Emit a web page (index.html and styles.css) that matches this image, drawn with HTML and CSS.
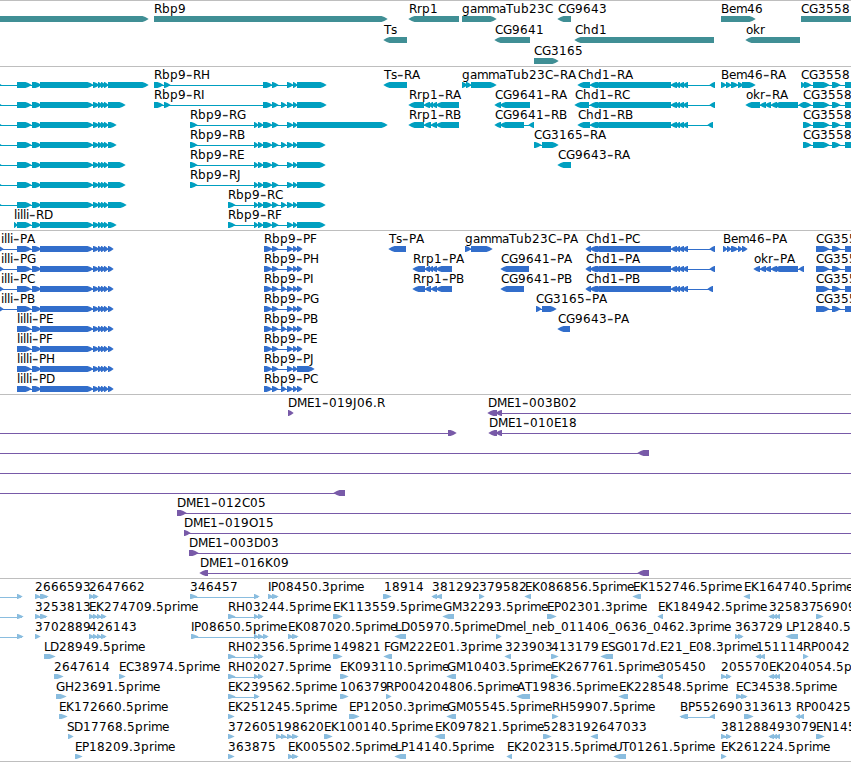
FILE: index.html
```
<!DOCTYPE html>
<html lang="en">
<head>
    <meta charset="UTF-8">
    <meta name="viewport" content="width=device-width, initial-scale=1.0">
    <title>Genome Browser</title>
    <link rel="stylesheet" href="styles.css">
</head>
<body>
    <div class="tracks">
        <svg class="track genes" id="genes"></svg>
        <svg class="track transcripts" id="transcripts"></svg>
        <svg class="track proteins" id="proteins"></svg>
        <svg class="track clones" id="clones"></svg>
        <svg class="track ests" id="ests"></svg>
    </div>
    <script src="tracks.js"></script>
</body>
</html>
```
FILE: styles.css
```
body {
    margin: 0;
    background-color: #ffffff;
    overflow: hidden;
}
.tracks {
    display: flex;
    flex-direction: column;
    width: 851px;
    border-bottom: 1px solid #bebebe;
}
.track {
    display: block;
    box-sizing: border-box;
    width: 100%;
    border-top: 1px solid #bebebe;
}
.track text {
    font-family: "DejaVu Sans", Verdana, sans-serif;
    font-size: 12px;
    fill: #000000;
}
.track .dash {
    font-size: 18px;
    fill: #333333;
}
.track rect {
    shape-rendering: crispEdges;
}
.genes {
    height: 66px;
    fill: #408f95;
}
.transcripts {
    height: 164px;
    fill: #009fc0;
}
.proteins {
    height: 164px;
    fill: #326ecb;
}
.clones {
    height: 184px;
    fill: #785aa8;
}
.ests {
    height: 183px;
    fill: #8abddf;
}
```
FILE: tracks.js
```
const SVG = 'http://www.w3.org/2000/svg';

// character widths in pixels, digits and anything not listed are 8
const widths = {
    '-': 7, '.': 4, '_': 6,
    D: 9, E: 7, F: 6, G: 9, H: 9, I: 3, J: 4, L: 6, M: 10, N: 9, O: 9, P: 7, S: 7, T: 7,
    a: 7, e: 7, i: 3, k: 7, l: 3, m: 11, o: 7, r: 5, s: 6
};

// block lists: start, end, start, end, ...
const lilli = [17, 31, 32, 41, 40, 93, 93, 99, 98, 102, 101, 105, 104, 108];
const rbpMid = [254, 258, 258, 263, 263, 272, 272, 278];
const rbpEnd = [287, 293, 293, 297];
const rbpCds = [264, 272, 272, 278];
const chd = [590, 598, 594, 671, 671, 677, 676, 680, 679, 684, 683, 688];
const cg = [813, 829, 832, 840, 845, 865];
const rh = [228, 235, 254, 258, 258, 263];
const four = [89, 94, 93, 97, 97, 101, 101, 106];
const triple = [769, 774, 773, 777, 776, 780];

// row, strand, label, blocks, label x (when it is not the start)
const genes = [
    [0, '+', '', [-10, 148]],
    [0, '+', 'Rbp9', [154, 387]],
    [0, '-', 'Rrp1', [409, 459]],
    [0, '+', 'gammaTub23C', [462, 496]],
    [0, '-', 'CG9643', [558, 571]],
    [0, '+', 'Bem46', [721, 755]],
    [0, '+', 'CG3558', [801, 870]],
    [1, '-', 'Ts', [384, 407]],
    [1, '-', 'CG9641', [495, 530]],
    [1, '-', 'Chd1', [575, 714]],
    [1, '-', 'okr', [746, 800]],
    [2, '+', 'CG3165', [534, 558]]
];

const transcripts = [
    [0, '+', '', [-6, 1, ...lilli, 108, 148]],
    [1, '+', '', [-6, 1, ...lilli, 108, 125]],
    [2, '+', '', [-6, 1, ...lilli, 108, 116]],
    [3, '+', '', [-6, 1, ...lilli, 108, 116]],
    [4, '+', '', [-6, 1, ...lilli, 108, 125]],
    [5, '+', '', [-6, 1, ...lilli, 108, 125]],
    [6, '+', '', [-6, 1, ...lilli, 108, 126]],
    [7, '+', 'lilli-RD', [14, 17, ...lilli, 108, 116]],
    [0, '+', 'Rbp9-RH', [154, 163, 164, 170, 263, 272, 272, 278, ...rbpEnd, 297, 326]],
    [1, '+', 'Rbp9-RI', [154, 163, 164, 170, 263, 272, 272, 278, 281, 286, ...rbpEnd, 297, 326]],
    [2, '+', 'Rbp9-RG', [190, 197, ...rbpMid, ...rbpEnd, 297, 387]],
    [3, '+', 'Rbp9-RB', [190, 197, ...rbpMid, 281, 286, ...rbpEnd, 297, 325]],
    [4, '+', 'Rbp9-RE', [190, 197, ...rbpMid, ...rbpEnd, 297, 325]],
    [5, '+', 'Rbp9-RJ', [190, 197, ...rbpMid, ...rbpEnd, 297, 325]],
    [6, '+', 'Rbp9-RC', [228, 235, ...rbpMid, 281, 286, ...rbpEnd, 297, 325]],
    [7, '+', 'Rbp9-RF', [228, 235, ...rbpMid, ...rbpEnd, 297, 325]],
    [0, '-', 'Ts-RA', [384, 407]],
    [1, '-', 'Rrp1-RA', [409, 424, 424, 430, 429, 433, 432, 437, 436, 459]],
    [2, '-', 'Rrp1-RB', [409, 424, 424, 431, 431, 437, 436, 459]],
    [0, '+', 'gammaTub23C-RA', [462, 467, 466, 471, 471, 496]],
    [1, '-', 'CG9641-RA', [495, 501, 500, 530]],
    [2, '-', 'CG9641-RB', [495, 501, 500, 524, 529, 534]],
    [3, '+', 'CG3165-RA', [534, 541, 542, 558]],
    [4, '-', 'CG9643-RA', [558, 571]],
    [0, '-', 'Chd1-RA', [578, 590, ...chd, 710, 715]],
    [1, '-', 'Chd1-RC', [575, 589, ...chd, 710, 715]],
    [2, '-', 'Chd1-RB', [578, 590, ...chd, 708, 713]],
    [0, '+', 'Bem46-RA', [721, 726, 726, 731, 731, 738, 738, 743, 742, 755]],
    [1, '-', 'okr-RA', [746, 760, 760, 766, 765, 771, 771, 777, 774, 798, 799, 804]],
    [0, '+', 'CG3558', [801, 805, 804, 811, ...cg]],
    [1, '+', 'CG3558', [803, 811, ...cg]],
    [2, '+', 'CG3558', [803, 811, ...cg]],
    [3, '+', 'CG3558', [803, 811, ...cg]]
];

const proteins = [
    ...['PA', 'PG', 'PC', 'PB'].map((n, i) => [i, '+', 'illi-' + n, [-2, 3, ...lilli, 108, 113], 1]),
    ...['PE', 'PF', 'PH', 'PD'].map((n, i) => [i + 4, '+', 'lilli-' + n, [...lilli, 108, 113]]),
    [0, '+', 'Rbp9-PF', [...rbpCds, ...rbpEnd, 297, 302]],
    [1, '+', 'Rbp9-PH', [...rbpCds, ...rbpEnd, 297, 302]],
    [2, '+', 'Rbp9-PI', [...rbpCds, 281, 286, ...rbpEnd, 297, 302]],
    [3, '+', 'Rbp9-PG', [...rbpCds, ...rbpEnd, 297, 302]],
    [4, '+', 'Rbp9-PB', [...rbpCds, 281, 286, ...rbpEnd, 297, 302]],
    [5, '+', 'Rbp9-PE', [...rbpCds, ...rbpEnd, 297, 302]],
    [6, '+', 'Rbp9-PJ', [...rbpCds, ...rbpEnd, 297, 314]],
    [7, '+', 'Rbp9-PC', [...rbpCds, 281, 286, ...rbpEnd, 297, 302]],
    [0, '-', 'Ts-PA', [389, 406]],
    [1, '-', 'Rrp1-PA', [413, 425, 425, 430, 429, 433, 432, 437, 436, 452]],
    [2, '-', 'Rrp1-PB', [413, 425, 425, 431, 431, 437, 436, 452]],
    [0, '+', 'gammaTub23C-PA', [465, 471, 471, 492]],
    [1, '-', 'CG9641-PA', [501, 529]],
    [2, '-', 'CG9641-PB', [501, 524]],
    [3, '+', 'CG3165-PA', [536, 541, 542, 556]],
    [4, '-', 'CG9643-PA', [558, 570]],
    [0, '-', 'Chd1-PC', [586, 591, ...chd, 710, 715]],
    [1, '-', 'Chd1-PA', [586, 591, ...chd, 710, 715]],
    [2, '-', 'Chd1-PB', [586, 591, ...chd, 708, 713]],
    [0, '+', 'Bem46-PA', [723, 727, 727, 731, 731, 738, 738, 742, 742, 747]],
    [1, '-', 'okr-PA', [754, 760, 760, 766, 765, 771, 771, 777, 774, 798, 799, 804]],
    ...[0, 1, 2, 3].map(i => [i, '+', 'CG3558', [816, 829, 832, 840, 845, 865]])
];

const clones = [
    [0, '+', 'DME1-019J06.R', [288, 293]],
    [0, '-', 'DME1-003B02', [488, 497, 496, 502, 900, 910]],
    [1, '+', '', [-20, -10, 448, 456]],
    [1, '-', 'DME1-010E18', [489, 497, 496, 502, 900, 910]],
    [2, '-', '', [-20, -10, 638, 649]],
    [3, '+', '', [-20, -10, 900, 910]],
    [4, '-', '', [-20, -10, 334, 345]],
    [5, '+', 'DME1-012C05', [177, 186, 900, 910]],
    [6, '+', 'DME1-019O15', [184, 190, 900, 910]],
    [7, '+', 'DME1-003D03', [189, 198, 900, 910]],
    [8, '-', 'DME1-016K09', [200, 208, 638, 649]]
];

const ests = [
    [0, '+', '', [-20, -10, 17, 22]],
    [0, '+', '2666593', [35, 40, 40, 48]],
    [0, '+', '2647662', [89, 94, 93, 98]],
    [0, '+', '346457', [190, 197, 254, 259]],
    [0, '+', 'IP08450.3prime', [268, 273, 272, 278]],
    [0, '+', '18914', [383, 391], 384],
    [0, '-', '381292', [432, 437, 436, 442]],
    [0, '+', '379582', [479, 484]],
    [0, '-', 'EK086856.5prime', [525, 531]],
    [0, '-', 'EK152746.5prime', [633, 641]],
    [0, '-', 'EK164740.5prime', [744, 750]],
    [1, '+', '', [-20, -10, 17, 23]],
    [1, '+', '3253813', [35, 40, 40, 47]],
    [1, '+', 'EK274709.5prime', four],
    [1, '+', 'RH03244.5prime', rh],
    [1, '+', 'EK113559.5prime', [333, 342]],
    [1, '-', 'GM32293.5prime', [443, 454]],
    [1, '+', 'EP02301.3prime', [547, 556]],
    [1, '-', 'EK184942.5prime', [658, 663]],
    [1, '-', '325837', triple],
    [1, '+', '56909', [816, 823]],
    [2, '+', '', [-20, -10, 17, 23]],
    [2, '+', '3702889', [35, 40]],
    [2, '+', '426143', four],
    [2, '+', 'IP08650.5prime', [191, 198, 254, 258, 258, 263, 263, 268]],
    [2, '+', 'EK087020.5prime', [288, 293, 292, 298]],
    [2, '-', 'LD05970.5prime', [395, 406]],
    [2, '+', 'Dmel_neb_011406_0636_0462.3prime', [496, 501]],
    [2, '+', '363729', [735, 739, 738, 743]],
    [2, '-', 'LP12840.5prime', [786, 798]],
    [3, '+', 'LD28949.5prime', [44, 55]],
    [3, '+', 'RH02356.5prime', rh],
    [3, '+', '149821', [333, 342]],
    [3, '-', 'FGM222E01.3prime', [384, 392]],
    [3, '-', '323903', [505, 511]],
    [3, '+', '413179', [551, 558]],
    [3, '-', 'ESG017d.E21_E08.3prime', [601, 613]],
    [3, '-', '151114', [756, 761, 760, 765]],
    [3, '+', 'RP0042', [803, 808]],
    [4, '+', '2647614', [54, 63]],
    [4, '+', 'EC38974.5prime', [119, 125]],
    [4, '+', 'RH02027.5prime', rh],
    [4, '+', 'EK093110.5prime', [340, 348]],
    [4, '-', 'GM10403.5prime', [447, 456]],
    [4, '+', 'EK267761.5prime', [551, 558]],
    [4, '-', '305450', [658, 663]],
    [4, '+', '205570', [721, 726, 726, 731]],
    [4, '-', 'EK204054.5prime', triple],
    [5, '+', 'GH23691.5prime', [56, 66]],
    [5, '+', 'EK239562.5prime', [228, 235, 254, 259]],
    [5, '+', '106379', [340, 348]],
    [5, '+', 'RP004204806.5prime', [386, 391]],
    [5, '-', 'AT19836.5prime', [517, 530]],
    [5, '-', 'EK228548.5prime', [619, 628]],
    [5, '+', 'EC34538.5prime', [736, 742, 741, 747]],
    [6, '+', 'EK172660.5prime', [59, 67]],
    [6, '+', 'EK251245.5prime', [228, 234]],
    [6, '+', 'EP12050.3prime', [349, 359]],
    [6, '-', 'GM05545.5prime', [447, 456]],
    [6, '+', 'RH59907.5prime', [552, 558]],
    [6, '-', 'BP552690', [680, 688, 710, 715]],
    [6, '+', '313613', [744, 753]],
    [6, '-', 'RP00425', [796, 800, 799, 804]],
    [7, '+', 'SD17768.5prime', [68, 73], 67],
    [7, '+', '372605', [228, 234]],
    [7, '+', '198620', [276, 281, 281, 286, 287, 292, 292, 298]],
    [7, '+', 'EK100140.5prime', [324, 332]],
    [7, '-', 'EK097821.5prime', [435, 445]],
    [7, '+', '528319', [543, 551]],
    [7, '-', '2647033', [591, 598]],
    [7, '+', '381288', [721, 726, 726, 731]],
    [7, '-', '493079', triple],
    [7, '+', 'EN145', [816, 824]],
    [8, '+', 'EP18209.3prime', [75, 82]],
    [8, '+', '363875', [228, 234]],
    [8, '+', 'EK005502.5prime', [288, 293, 292, 298]],
    [8, '-', 'LP14140.5prime', [395, 406]],
    [8, '-', 'EK202315.5prime', [507, 512]],
    [8, '-', 'UT01261.5prime', [614, 626]],
    [8, '+', 'EK261224.5prime', [721, 726]]
];

function add(parent, name, attrs) {
    const node = document.createElementNS(SVG, name);
    for (const key in attrs) {
        node.setAttribute(key, attrs[key]);
    }
    parent.appendChild(node);
    return node;
}

function drawBlock(svg, x1, x2, top, height, strand) {
    const head = Math.min(5.5, (x2 - x1) * 0.85);
    const mid = top + height / 2;
    const bottom = top + height;
    // tail side, neck and tip of the arrow
    const dir = strand === '+' ? 1 : -1;
    const tail = strand === '+' ? x1 : x2;
    const tip = strand === '+' ? x2 : x1;
    const neck = tip - dir * head;
    const bend = tip - dir * head / 2;
    const points = [
        [tail, top], [neck, top], [bend, top + 0.9], [tip + dir * 0.7, mid],
        [bend, bottom - 0.9], [neck, bottom], [tail, bottom]
    ];
    add(svg, 'polygon', { points: points.join(' ') });
}

function drawLabel(svg, label, x, y) {
    const text = add(svg, 'text', {});
    for (const part of label.split(/(-)/)) {
        const xs = [];
        for (const ch of part) {
            xs.push(x);
            x += widths[ch] || 8;
        }
        const dash = part === '-';
        const span = add(text, 'tspan', { x: xs.join(' '), y: dash ? y + 1 : y });
        if (dash) {
            span.setAttribute('class', 'dash');
        }
        span.textContent = part;
    }
}

function drawTrack(id, features, rowHeight, barHeight) {
    const svg = document.getElementById(id);
    for (const [row, strand, label, blocks, labelX] of features) {
        const top = 15 + row * rowHeight;
        const start = blocks[0];
        const end = blocks[blocks.length - 1];
        if (blocks.length > 2) {
            add(svg, 'rect', { x: start + 1, y: top + 3, width: end - start - 2, height: 1 });
        }
        for (let i = 0; i < blocks.length; i += 2) {
            drawBlock(svg, blocks[i], blocks[i + 1], top, barHeight, strand);
        }
        if (label) {
            drawLabel(svg, label, labelX || start, top - 3);
        }
    }
}

drawTrack('genes', genes, 21, 6);
drawTrack('transcripts', transcripts, 20, 6);
drawTrack('proteins', proteins, 20, 6);
drawTrack('clones', clones, 20, 6);
drawTrack('ests', ests, 20, 5);
```
